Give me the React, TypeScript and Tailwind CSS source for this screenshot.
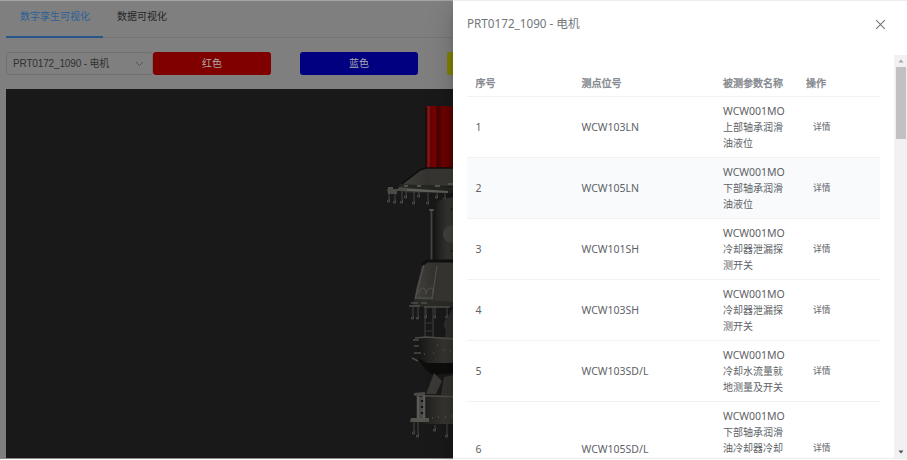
import { ReactNode } from "react";

type Row = { id: number; tag: string; lines: string[]; tall?: boolean };

const rows: Row[] = [
  { id: 1, tag: "WCW103LN", lines: ["上部轴承润滑", "油液位"] },
  { id: 2, tag: "WCW105LN", lines: ["下部轴承润滑", "油液位"] },
  { id: 3, tag: "WCW101SH", lines: ["冷却器泄漏探", "测开关"] },
  { id: 4, tag: "WCW103SH", lines: ["冷却器泄漏探", "测开关"] },
  { id: 5, tag: "WCW103SD/L", lines: ["冷却水流量就", "地测量及开关"] },
  { id: 6, tag: "WCW105SD/L", lines: ["下部轴承润滑", "油冷却器冷却"], tall: true },
];

function Swatch({ className, children }: { className: string; children?: ReactNode }) {
  return (
    <button className={`h-[23px] w-[118px] shrink-0 rounded-[3px] text-[10px] leading-[22px] text-[#aaa] ${className}`}>
      {children}
    </button>
  );
}

function Hook({ x, y, h }: { x: number; y: number; h: number }) {
  return <path d={`M${x} ${y}v${h}m-1.5 -2v2h2v-3`} stroke="#4c4c49" strokeWidth="0.9" fill="none" />;
}

function Motor() {
  return (
    <svg className="h-full w-[73px] shrink-0" viewBox="380 89 73 369" preserveAspectRatio="none">
      <defs>
        <linearGradient id="red" x1="0" x2="1">
          <stop offset="0" stopColor="#520000" />
          <stop offset="0.1" stopColor="#7c2020" />
          <stop offset="0.18" stopColor="#650000" />
          <stop offset="0.34" stopColor="#800000" />
          <stop offset="0.42" stopColor="#3f0000" />
          <stop offset="0.62" stopColor="#700000" />
          <stop offset="1" stopColor="#570000" />
        </linearGradient>
        <linearGradient id="steel" x1="0" x2="1">
          <stop offset="0" stopColor="#141413" />
          <stop offset="0.35" stopColor="#252523" />
          <stop offset="0.75" stopColor="#363531" />
          <stop offset="1" stopColor="#33322e" />
        </linearGradient>
        <linearGradient id="cone" x1="0" x2="1">
          <stop offset="0" stopColor="#403f3b" />
          <stop offset="0.5" stopColor="#34332f" />
          <stop offset="1" stopColor="#3b3a36" />
        </linearGradient>
      </defs>
      {/* housing */}
      <path d="M426 106h27v62h-27z" fill="url(#red)" />
      <path d="M426 107v60" stroke="#260000" />
      {/* canopy */}
      <path d="M426 168h27v18l-52-1 18-14z" fill="url(#cone)" />
      <path d="M402 184l18-14 6-2h27" stroke="#0d0d0d" strokeWidth="1.5" fill="none" />
      <path d="M400 184l53 3v6h-45l-10-3z" fill="#252522" />
      <path d="M402 188l46 3v2l-46-2z" fill="#5f5e59" />
      <path d="M387 189h10l3-2 7 1v3h-10v3h-9z" fill="#4a4945" />
      <path d="M388 188h5M404 186h4M417 186h4M435 186h5M448 184h5" stroke="#62615c" strokeWidth="1.3" />
      <Hook x={389} y={192} h={10} />
      <Hook x={395} y={192} h={11} />
      <Hook x={402} y={191} h={12} />
      <Hook x={406} y={191} h={7} />
      <Hook x={414} y={192} h={12} />
      <Hook x={419} y={192} h={5} />
      <Hook x={428} y={193} h={11} />
      <Hook x={437} y={193} h={5} />
      <Hook x={445} y={193} h={7} />
      {/* shaft casing */}
      <path d="M433 205l7-5 13-3v64h-20z" fill="url(#steel)" />
      <path d="M431.500 209v51" stroke="#454540" strokeWidth="1.8" />
      <path d="M429 210h5" stroke="#5c5b57" strokeWidth="1.5" />
      <path d="M453 225c-5 0-10 4-10 9s4 9 10 9z" fill="#42413e" />
      <path d="M451 209h1M451 251h1" stroke="#111" strokeWidth="2" />
      {/* upper skirt */}
      <path d="M423 262h30v42l-38-5 1-9z" fill="url(#cone)" />
      <path d="M422 265l5-4h26" stroke="#111110" strokeWidth="3" fill="none" />
      <path d="M424 265l-9 34M437 266l-5 33" stroke="#54534f" strokeWidth="1.1" />
      <path d="M418 294c2-8 9-8 8 0m0 0c2-8 8-8 7 0M416 298h17" stroke="#53524e" strokeWidth="1" fill="none" />
      <path d="M414 299l39 3v5h-40z" fill="#2a2a27" />
      <path d="M411 303h7M421 303h6M409 306h11M424 307h26" stroke="#4f4e4a" strokeWidth="1.5" />
      <Hook x={413} y={306} h={13} />
      <Hook x={418} y={306} h={13} />
      <Hook x={426} y={306} h={12} />
      <Hook x={435} y={306} h={12} />
      <Hook x={447} y={306} h={12} />
      {/* open frame */}
      <path d="M447 318c-3 4-5 6-1 12l-1 7h8v-29z" fill="#2f2e2b" />
      <path d="M425 308v29M433 308v29M425 323h8M425 331h8" stroke="#3b3b38" strokeWidth="1.200" fill="none" />
      {/* drum */}
      <path d="M417 337h36v29l-8 1-19-2-9-10z" fill="url(#steel)" />
      <path d="M415 338l12-1 26 2" stroke="#4c4b47" strokeWidth="1.500" fill="none" />
      <path d="M413 340h6M414 346h5M414 353h7M412 358l6 3" stroke="#4c4b47" strokeWidth="1.500" />
      <path d="M424 354h1M433 353h1M443 350h1M450 351h1M437 345h1" stroke="#5f5e59" strokeWidth="1" />
      <path d="M417 358l10 5h26v10l-20 2-8-6z" fill="#0d0d0c" />
      <path d="M434 373l8 8-6 13h-10z" fill="#3a3936" />
      <path d="M444 377l9-2v20h-12z" fill="#33322e" />
      {/* base */}
      <path d="M417 395h36v29h-28l-8-3z" fill="url(#steel)" />
      <path d="M414 393l11-1v3l28 1v1.500l-30-1-9-1z" fill="#4c4b47" />
      <path d="M418 396v22M424 396v23" stroke="#5c5b57" strokeWidth="2.500" />
      <path d="M421 397v21" stroke="#4a4945" strokeWidth="4" />
      <path d="M422 400v2M422 406v2M422 412v2" stroke="#111" strokeWidth="2.200" />
      <path d="M411 418h18v4h-19z" fill="#55544f" />
      <path d="M432 418h1M438 417h1M445 417h1M451 416h1" stroke="#666560" />
      <Hook x={414} y={421} h={13} />
      <Hook x={418} y={421} h={16} />
      <Hook x={435} y={425} h={6} />
      <Hook x={447} y={424} h={13} />
    </svg>
  );
}

function Workspace() {
  return (
    <main className="flex w-[453px] shrink-0 flex-col overflow-hidden border-t border-[#a5a5a5] bg-[#7f7f7f] font-['Liberation_Sans','Noto_Sans_CJK_SC',sans-serif]">
      <nav className="ml-[6px] flex h-[37px] shrink-0 border-b border-[#757575] text-[10px] leading-[32px]">
        <div className="h-[37px] w-[97px] border-b-2 border-[#28568b] pl-[14px] text-[#2d5f98]">数字孪生可视化</div>
        <div className="pl-[14px] text-[#242424]">数据可视化</div>
      </nav>
      <div className="ml-[6px] mt-[14px] flex h-[23px] shrink-0">
        <div className="flex w-[147px] shrink-0 items-center justify-between rounded-[3px] border border-[#707070] pl-[6px] pr-[8px] text-[10px] text-[#303133]">
          <span className="whitespace-nowrap tracking-[-0.15px]">PRT0172_1090 - 电机</span>
          <svg className="h-[9px] w-[9px]" viewBox="0 0 9 9" fill="none" stroke="#555">
            <path d="M1 3l3.500 3.500L8 3" />
          </svg>
        </div>
        <div className="flex gap-[29px]">
          <Swatch className="bg-[#800000]">红色</Swatch>
          <Swatch className="bg-[#000080]">蓝色</Swatch>
          <Swatch className="bg-[#808000]" />
        </div>
      </div>
      <section className="ml-[6px] mt-[14px] flex h-[369px] shrink-0 justify-end bg-[#191919]">
        <Motor />
      </section>
      <div className="h-px bg-[#8a8a8a]" />
      <div className="h-px bg-white" />
    </main>
  );
}

function Drawer() {
  return (
    <aside className="relative flex flex-1 flex-col overflow-hidden border-t border-[#ececec] bg-white font-['Noto_Sans','Noto_Sans_CJK_SC',sans-serif] text-[#606266] shadow-[0_6px_10px_-4px_rgba(0,0,0,0.2),0_10px_26px_0_rgba(0,0,0,0.2)]">
      <header className="flex h-[54px] shrink-0 items-center justify-between pb-[8px] pl-[14px] pr-[21px]">
        <h2 className="text-[11.7px] text-[#72767b]">PRT0172_1090 - 电机</h2>
        <svg className="h-[11px] w-[11px]" viewBox="0 0 11 11" fill="none" stroke="#72767b" strokeWidth="1.1">
          <path d="M1.200 1.200l8.600 8.600M9.800 1.200l-8.600 8.600" />
        </svg>
      </header>
      <div className="flex h-[403px] shrink-0">
        <div className="ml-[14px] w-[413px] shrink-0 overflow-hidden pt-[15px] text-[10px]">
          <div className="grid h-[27px] grid-cols-[106px_141.500px_83px_1fr] items-center border-b border-[#f1f2f5] pl-[8.500px] text-[#85888e] [-webkit-text-stroke:0.4px_#85888e]">
            <span>序号</span>
            <span>测点位号</span>
            <span>被测参数名称</span>
            <span>操作</span>
          </div>
          {rows.map((r) => (
            <div
              key={r.id}
              className={`grid grid-cols-[106px_141.500px_83px_1fr] items-center border-b border-[#f1f2f5] pl-[8.500px] ${r.tall ? "h-[94px]" : "h-[61px]"} ${r.id === 2 ? "bg-[#f8fafc]" : ""}`}
            >
              <span className="pt-[2px] text-[10.500px]">{r.id}</span>
              <span className="pt-[2px] text-[10.500px]">{r.tag}</span>
              <div className="self-start pt-[6px] leading-[16.200px]">
                <div className="text-[10.500px]">WCW001MO</div>
                {r.lines.map((l) => (
                  <div key={l}>{l}</div>
                ))}
              </div>
              <span className="pl-[7px] pt-px text-[8.800px]">详情</span>
            </div>
          ))}
        </div>
        <div className="ml-auto flex w-[13px] flex-col items-center bg-[#f1f1f1]">
          <svg className="h-[12px] w-[12px] shrink-0" viewBox="0 0 12 12">
            <path d="M3.500 7.500L6 4.500l2.500 3z" fill="#a3a3a3" />
          </svg>
          <div className="h-[72px] w-[10px] bg-[#c1c1c1]" />
          <svg className="mt-auto h-[12px] w-[12px] shrink-0" viewBox="0 0 12 12">
            <path d="M3.500 4.500L6 7.500l2.500-3z" fill="#505050" />
          </svg>
        </div>
      </div>
      <div className="h-px bg-[#ececec]" />
      <div className="h-px bg-white" />
    </aside>
  );
}

export default function App() {
  return (
    <div className="flex h-[460px] w-[907px] overflow-hidden bg-white">
      <Workspace />
      <Drawer />
    </div>
  );
}
